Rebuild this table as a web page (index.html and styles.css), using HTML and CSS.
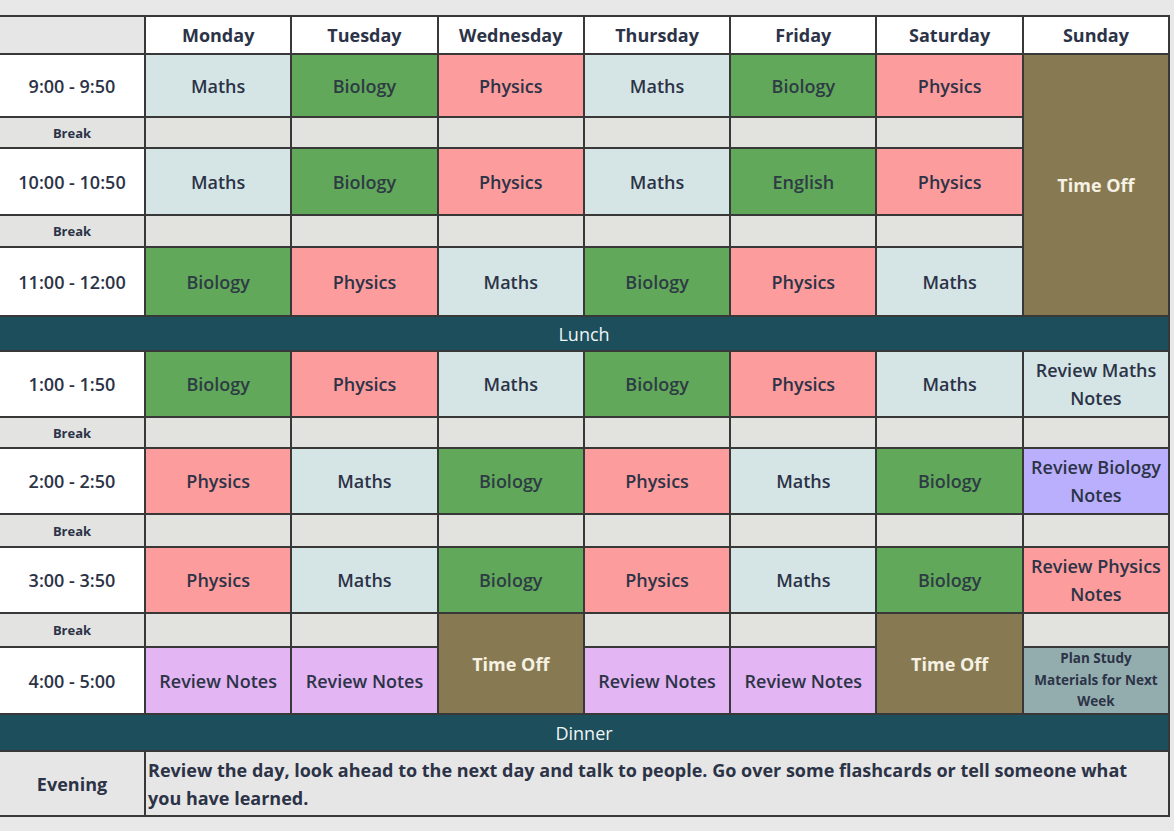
FILE: index.html
```html
<!DOCTYPE html>
<html>
<head>
<meta charset="utf-8">
<link rel="stylesheet" href="styles.css">
</head>
<body>
<table class="tt">
  <colgroup>
    <col class="c-time">
    <col class="c-day"><col class="c-day"><col class="c-day"><col class="c-day"><col class="c-day"><col class="c-day"><col class="c-day">
  </colgroup>
  <tr class="r-head">
    <td class="corner"></td>
    <th>Monday</th><th>Tuesday</th><th>Wednesday</th><th>Thursday</th><th>Friday</th><th>Saturday</th><th>Sunday</th>
  </tr>
  <tr class="r-slot r1">
    <td class="time">9:00 - 9:50</td>
    <td class="maths">Maths</td><td class="bio">Biology</td><td class="phys">Physics</td><td class="maths">Maths</td><td class="bio">Biology</td><td class="phys">Physics</td>
    <td class="off" rowspan="5">Time Off</td>
  </tr>
  <tr class="r-break b1">
    <td class="blabel">Break</td><td></td><td></td><td></td><td></td><td></td><td></td>
  </tr>
  <tr class="r-slot r2">
    <td class="time">10:00 - 10:50</td>
    <td class="maths">Maths</td><td class="bio">Biology</td><td class="phys">Physics</td><td class="maths">Maths</td><td class="bio">English</td><td class="phys">Physics</td>
  </tr>
  <tr class="r-break b2">
    <td class="blabel">Break</td><td></td><td></td><td></td><td></td><td></td><td></td>
  </tr>
  <tr class="r-slot r3">
    <td class="time">11:00 - 12:00</td>
    <td class="bio">Biology</td><td class="phys">Physics</td><td class="maths">Maths</td><td class="bio">Biology</td><td class="phys">Physics</td><td class="maths">Maths</td>
  </tr>
  <tr class="r-meal lunch">
    <td colspan="8">Lunch</td>
  </tr>
  <tr class="r-slot r4">
    <td class="time">1:00 - 1:50</td>
    <td class="bio">Biology</td><td class="phys">Physics</td><td class="maths">Maths</td><td class="bio">Biology</td><td class="phys">Physics</td><td class="maths">Maths</td>
    <td class="maths">Review Maths Notes</td>
  </tr>
  <tr class="r-break b3">
    <td class="blabel">Break</td><td></td><td></td><td></td><td></td><td></td><td></td><td></td>
  </tr>
  <tr class="r-slot r5">
    <td class="time">2:00 - 2:50</td>
    <td class="phys">Physics</td><td class="maths">Maths</td><td class="bio">Biology</td><td class="phys">Physics</td><td class="maths">Maths</td><td class="bio">Biology</td>
    <td class="rbio">Review Biology Notes</td>
  </tr>
  <tr class="r-break b4">
    <td class="blabel">Break</td><td></td><td></td><td></td><td></td><td></td><td></td><td></td>
  </tr>
  <tr class="r-slot r6">
    <td class="time">3:00 - 3:50</td>
    <td class="phys">Physics</td><td class="maths">Maths</td><td class="bio">Biology</td><td class="phys">Physics</td><td class="maths">Maths</td><td class="bio">Biology</td>
    <td class="phys">Review Physics Notes</td>
  </tr>
  <tr class="r-break b5">
    <td class="blabel">Break</td><td></td><td></td><td class="off" rowspan="2">Time Off</td><td></td><td></td><td class="off" rowspan="2">Time Off</td><td></td>
  </tr>
  <tr class="r-slot r7">
    <td class="time">4:00 - 5:00</td>
    <td class="review">Review Notes</td><td class="review">Review Notes</td><td class="review">Review Notes</td><td class="review">Review Notes</td>
    <td class="plan">Plan Study Materials for Next Week</td>
  </tr>
  <tr class="r-meal dinner">
    <td colspan="8">Dinner</td>
  </tr>
  <tr class="r-evening">
    <td class="elabel">Evening</td>
    <td class="etext" colspan="7">Review the day, look ahead to the next day and talk to people. Go over some flashcards or tell someone what you have learned.</td>
  </tr>
</table>
</body>
</html>
```

FILE: styles.css
```css
html, body {
  margin: 0;
  padding: 0;
  background: #e8e8e8;
}
body {
  padding-top: 15px;
  font-family: "Open Sans", "Noto Sans", sans-serif;
  color: #2c3347;
}
.tt {
  border-collapse: collapse;
  table-layout: fixed;
  width: 1170px;
  margin-left: -2px;
}
.c-time { width: 146px; }
.c-day { width: 146.3px; }
.tt td, .tt th {
  border: 2px solid #383838;
  padding: 0 3px;
  text-align: center;
  vertical-align: middle;
  font-size: 18px;
  font-weight: 600;
  line-height: 28px;
  background: #e2e2de;
}
.tt th {
  background: #ffffff;
  font-weight: 700;
}
.tt td.corner { background: #e6e6e6; }
.r-head th, .r-head td { height: 36px; }
.r1 td { height: 61px; }
.r2 td { height: 65px; }
.r3 td { height: 67px; }
.r4 td { height: 64px; }
.r5 td, .r6 td { height: 64px; }
.r7 td { height: 65px; }
.b1 td, .b3 td { height: 29px; }
.b2 td { height: 30px; }
.b4 td { height: 31px; }
.b5 td { height: 32px; }
.tt td.time {
  background: #ffffff;
  font-weight: 550;
}
.tt td.blabel {
  background: #e3e3e1;
  font-size: 13px;
  font-weight: 700;
}
.tt td.maths { background: #d5e5e6; }
.tt td.bio { background: #62a85a; color: #2d3c44; }
.tt td.phys { background: #fd9c9c; }
.tt td.off { background: #877a53; color: #f6f1e2; font-weight: 700; }
.tt td.review { background: #e3b5f3; }
.tt td.rbio { background: #b9affd; }
.tt td.plan {
  background: #93adae;
  font-size: 13.5px;
  font-weight: 700;
  line-height: 21.5px;
  padding: 0 6px;
}
.r-meal td {
  background: #1c4e5b;
  color: #f1f4f5;
  font-weight: 400;
  font-size: 18px;
}
.lunch td { height: 33px; }
.dinner td { height: 35px; }
.r-evening td { height: 63px; background: #e6e6e6; }
.tt td.elabel { font-weight: 700; }
.tt td.etext {
  text-align: left;
  font-weight: 700;
  padding-left: 2px;
  padding-right: 36px;
}
```
